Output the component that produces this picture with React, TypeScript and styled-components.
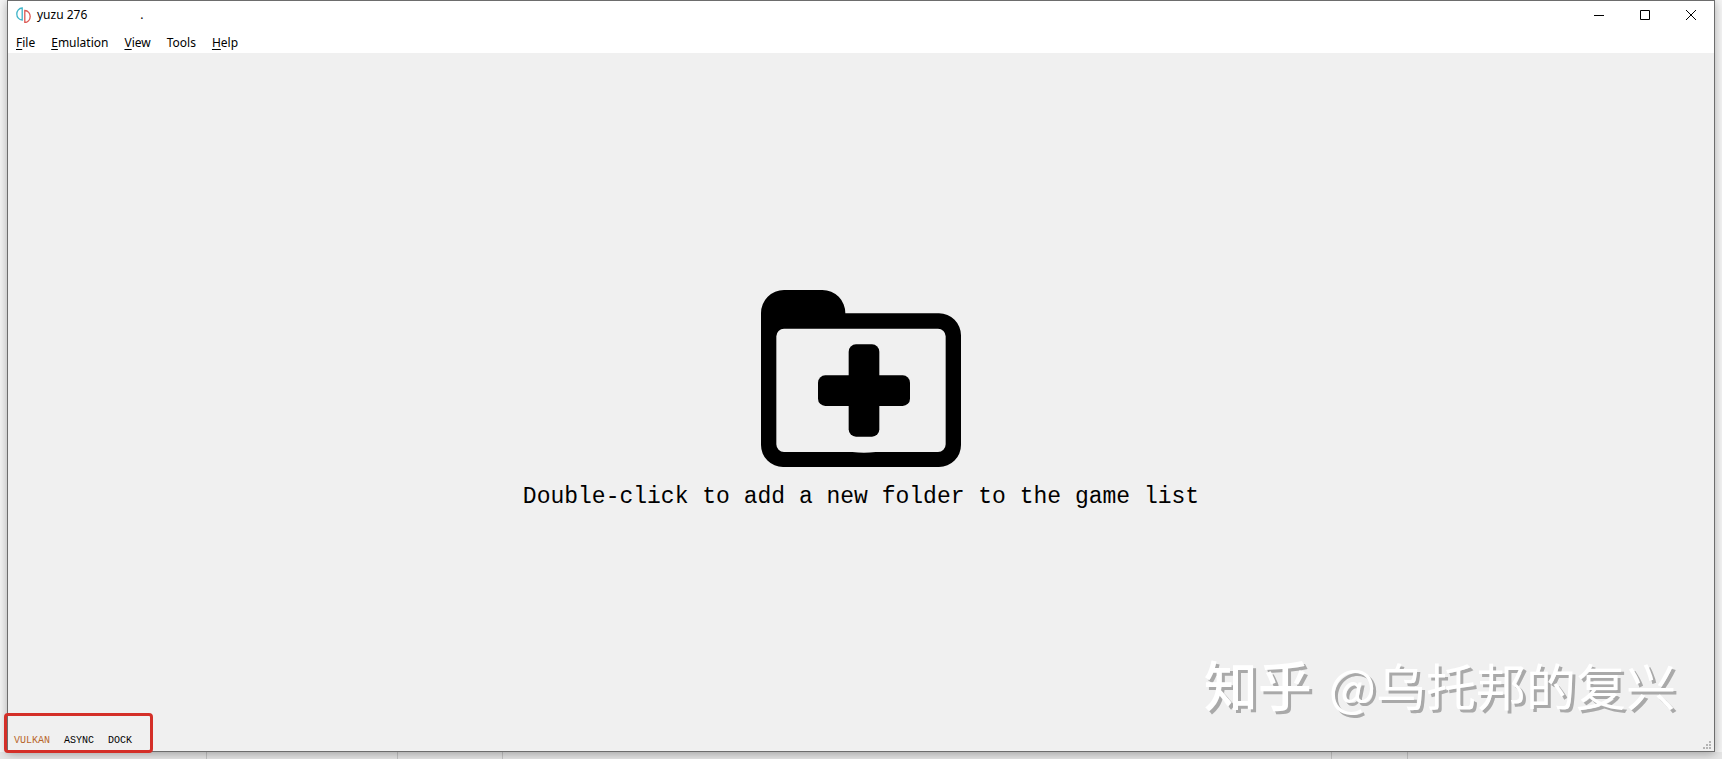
import React from 'react';
import styled, { createGlobalStyle } from 'styled-components';

const GlobalStyle = createGlobalStyle`
  *, *::before, *::after { box-sizing: border-box; }
  body { margin: 0; background: #f4f4f4; }
`;

const Desktop = styled.div`
  position: relative;
  display: flex;
  flex-direction: column;
  min-height: 100vh;
  overflow: hidden;
`;

const AppWindow = styled.div`
  position: relative;
  z-index: 1;
  flex: 1;
  display: flex;
  flex-direction: column;
  margin: 0 7px;
  border: 1px solid #6d6d6d;
  background: #f0f0f0;
  box-shadow: 0 2px 9px rgba(0, 0, 0, 0.3);
  font-family: 'Noto Sans', 'Noto Sans CJK SC', sans-serif;
  font-size: 12px;
  line-height: 16px;
  color: #000;
`;

const TitleBar = styled.header`
  display: flex;
  align-items: center;
  height: 28px;
  padding-left: 8px;
  background: #fff;
`;

const Title = styled.h1`
  display: flex;
  gap: 53px;
  margin: 0 auto 0 6px;
  font-size: 12px;
  font-weight: 400;
  line-height: 18px;
`;

const CaptionButton = styled.button`
  display: flex;
  align-items: center;
  justify-content: center;
  width: 46px;
  height: 28px;
  padding: 0;
  border: 0;
  background: none;
`;

const MenuBar = styled.nav`
  display: flex;
  align-items: flex-start;
  gap: 16px;
  height: 24px;
  padding: 6px 8px 2px;
  background: #fff;
`;

const MenuItem = styled.button`
  padding: 0;
  border: 0;
  background: none;
  color: inherit;
  font: inherit;
  line-height: 16px;
`;

const Mnemonic = styled.span`
  text-decoration: underline;
  text-underline-offset: 2px;
`;

const GameList = styled.main`
  flex: 1;
  display: flex;
  flex-direction: column;
  align-items: center;
  justify-content: center;
  gap: 14px;
  padding-top: 22px;
`;

const Hint = styled.p`
  margin: 0;
  font-family: 'Liberation Mono', monospace;
  font-size: 23px;
  line-height: 32px;
`;

const StatusBar = styled.footer`
  display: flex;
  align-items: flex-end;
  justify-content: space-between;
  height: 24px;
`;

const StatusGroup = styled.div`
  display: flex;
  gap: 14px;
  padding: 0 0 3px 6px;
`;

const StatusButton = styled.button<{ $accent?: boolean }>`
  padding: 0;
  border: 0;
  background: none;
  color: ${({ $accent }) => ($accent ? '#b8662a' : '#000')};
  font-family: 'Liberation Mono', monospace;
  font-size: 10px;
  line-height: 14px;
`;

const Highlight = styled.div`
  position: absolute;
  left: -4px;
  bottom: -2px;
  width: 149px;
  height: 40px;
  border: 3px solid #d42f28;
  border-radius: 4px;
  pointer-events: none;
`;

const Watermark = styled.div`
  position: absolute;
  right: 38px;
  bottom: 31px;
  display: flex;
  align-items: center;
  gap: 17px;
  color: #fff;
  font-family: 'Noto Sans CJK SC', sans-serif;
  font-size: 50px;
  line-height: 72px;
  text-shadow: 3px 3px 0 #a9a9a9;
  pointer-events: none;
`;

const Brand = styled.span`
  font-size: 54px;
  font-weight: 500;
`;

const Backdrop = styled.div`
  display: grid;
  grid-template-columns: 207fr 191fr 105fr 829fr 76fr 314fr;
  height: 7px;
  background: #e6e6e6;
`;

const Pane = styled.div`
  border-right: 1px solid #c4c4c4;
  &:last-child { border: 0; }
`;

const Logo = () => (
  <svg width="15" height="16" viewBox="0 0 15 16" fill="none" strokeWidth="1.3" aria-hidden="true">
    <path d="M6.2 1v12C3 13 .8 10.200.8 7S3 1 6.200 1Z" stroke="#3fb4c8" />
    <path d="M8.800 3.500v12c3.200 0 5.400-2.800 5.400-6s-2.200-6-5.400-6Z" stroke="#dc5a55" />
  </svg>
);

const FolderAdd = () => (
  <svg width="200" height="177" viewBox="0 0 600 531" aria-hidden="true">
    <path
      fillRule="evenodd"
      d="M69 0H184A69 69 0 0 1 253 70H534A66 66 0 0 1 600 136V465A66 66 0 0 1 534 531H66A66 66 0 0 1 0 465V69A69 69 0 0 1 69 0ZM69 116A23 23 0 0 0 46 139V463A23 23 0 0 0 69 486H274Q309 491 344 486H531A23 23 0 0 0 554 463V139A23 23 0 0 0 531 116Z"
    />
    <rect x="263" y="163" width="92" height="277" rx="22" />
    <rect x="171" y="256" width="276" height="92" rx="22" />
  </svg>
);

const SizeGrip = () => (
  <svg width="12" height="12" fill="#b4b4b4" aria-hidden="true">
    <path d="M7 2h2v2h-2zM4 5h2v2h-2zM7 5h2v2h-2zM1 8h2v2h-2zM4 8h2v2h-2zM7 8h2v2h-2z" />
  </svg>
);

const menus = [
  { label: 'File', key: true },
  { label: 'Emulation', key: true },
  { label: 'View', key: true },
  { label: 'Tools', key: false },
  { label: 'Help', key: true },
];

const captions = [
  { label: 'Minimize', d: 'M0 5.500H10' },
  { label: 'Maximize', d: 'M.5.5H9.500V9.500H.5Z' },
  { label: 'Close', d: 'M0 0L10 10M10 0L0 10' },
];

export default function App() {
  return (
    <Desktop>
      <GlobalStyle />
      <AppWindow>
        <TitleBar>
          <Logo />
          <Title>
            <span>yuzu 276</span>
            <span>.</span>
          </Title>
          {captions.map(({ label, d }) => (
            <CaptionButton key={label} type="button" aria-label={label}>
              <svg width="10" height="10" fill="none" stroke="#000"><path d={d} /></svg>
            </CaptionButton>
          ))}
        </TitleBar>
        <MenuBar>
          {menus.map(({ label, key }) => (
            <MenuItem key={label} type="button">
              {key ? <><Mnemonic>{label[0]}</Mnemonic>{label.slice(1)}</> : label}
            </MenuItem>
          ))}
        </MenuBar>
        <GameList>
          <FolderAdd />
          <Hint>Double-click to add a new folder to the game list</Hint>
        </GameList>
        <StatusBar>
          <StatusGroup>
            <StatusButton type="button" $accent>VULKAN</StatusButton>
            <StatusButton type="button">ASYNC</StatusButton>
            <StatusButton type="button">DOCK</StatusButton>
          </StatusGroup>
          <SizeGrip />
        </StatusBar>
        <Watermark>
          <Brand>知乎</Brand>
          <span>@乌托邦的复兴</span>
        </Watermark>
        <Highlight />
      </AppWindow>
      <Backdrop>
        <Pane /><Pane /><Pane /><Pane /><Pane /><Pane />
      </Backdrop>
    </Desktop>
  );
}
